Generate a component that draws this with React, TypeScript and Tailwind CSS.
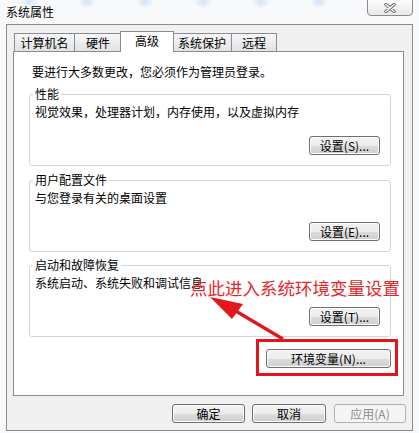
import React from "react";

type BtnProps = { label: string; className?: string; disabled?: boolean };

function WinButton({ label, className = "", disabled = false }: BtnProps) {
  return (
    <button
      className={`h-[19px] rounded-[3px] border text-[12px] leading-none flex items-center justify-center ${
        disabled
          ? "border-[#adb2b5] bg-[#f4f4f4] text-[#8d8d8d]"
          : "border-[#707070] bg-[linear-gradient(#f3f3f3_0%,#ececec_50%,#dcdcdc_50%,#d0d0d0_100%)] shadow-[inset_0_0_0_1px_#fbfbfb] text-black"
      } ${className}`}
    >
      {label}
    </button>
  );
}

type GroupProps = { title: string; desc: string; button: string; className?: string };

function Group({ title, desc, button, className = "" }: GroupProps) {
  return (
    <fieldset className={`border border-[#d5d5d5] rounded-[3px] pl-[3px] pr-[10px] pb-[10px] ${className}`}>
      <legend className="px-[2px] text-[12px] leading-[14px]">{title}</legend>
      <div className="ml-[2px] mt-[4px] text-[12px] leading-[14px]">{desc}</div>
      <div className="mt-[17px] flex justify-end">
        <WinButton label={button} className="w-[71px]" />
      </div>
    </fieldset>
  );
}

const tabs = [
  { name: "计算机名", cls: "w-[61px]" },
  { name: "硬件", cls: "-ml-px w-[48px]" },
  { name: "高级", cls: "-ml-[2px] w-[54px]", active: true },
  { name: "系统保护", cls: "-ml-[2px] w-[60px]" },
  { name: "远程", cls: "-ml-px w-[46px]" },
];

export default function App() {
  return (
    <div className="relative w-[419px] h-[433px] overflow-hidden bg-[#f7f9fb] text-black font-['Noto_Sans_CJK_SC','Noto_Sans',sans-serif]">
      {/* Title bar */}
      <div className="flex h-[24px] items-start bg-[radial-gradient(ellipse_9px_6px_at_50%_2px,#cfe1f3,transparent)] bg-[length:58px_24px] bg-repeat-x">
        <span className="pl-[6px] pt-[5px] text-[12px] leading-[14px]">系统属性</span>
        <button className="ml-auto mr-[6px] -mt-px flex h-[17px] w-[46px] items-center justify-center rounded-b-[4px] border border-[#8a8a8a] bg-[linear-gradient(#fdfdfd,#e8e8e8)]">
          <svg width="12" height="10" viewBox="0 0 12 10">
            <path d="M2 1.5 L10 8.5 M10 1.5 L2 8.5" stroke="#6f6f6f" strokeWidth="3.4" strokeLinecap="round" fill="none" />
            <path d="M2 1.5 L10 8.5 M10 1.5 L2 8.5" stroke="#ffffff" strokeWidth="1.4" strokeLinecap="round" fill="none" />
          </svg>
        </button>
      </div>

      {/* Dialog body */}
      <div className="ml-[6px] h-[407px] w-[407px] border border-[#8c8c8c] bg-[#f0f0f0]">
        <div className="px-[6px] pt-[6px]">
          {/* Tabs */}
          <div className="flex h-[20px] items-end pl-[1px]">
            {tabs.map((t) =>
              t.active ? (
                <div
                  key={t.name}
                  className={`relative z-10 mb-[-1px] flex h-[21px] items-start justify-center border border-b-0 border-[#898c95] bg-white pt-[2px] text-[12px] leading-[14px] ${t.cls}`}
                >
                  {t.name}
                </div>
              ) : (
                <div
                  key={t.name}
                  className={`flex h-[18px] items-start justify-center border border-b-0 border-[#898c95] bg-[linear-gradient(#f7f7f7,#e2e2e2)] pt-[2px] text-[12px] leading-[14px] ${t.cls}`}
                >
                  {t.name}
                </div>
              )
            )}
          </div>

          {/* Tab panel */}
          <div className="h-[345px] w-[391px] border border-[#898c95] bg-white pl-[15px] pr-[12px] pt-[13px]">
            <div className="ml-[3px] text-[12px] leading-[14px]">要进行大多数更改，您必须作为管理员登录。</div>
            <Group className="mt-[8px]" title="性能" desc="视觉效果，处理器计划，内存使用，以及虚拟内存" button="设置(S)..." />
            <Group className="mt-[7px]" title="用户配置文件" desc="与您登录有关的桌面设置" button="设置(E)..." />
            <Group className="mt-[6px]" title="启动和故障恢复" desc="系统启动、系统失败和调试信息" button="设置(T)..." />
            <div className="mt-[12px] flex justify-end">
              <WinButton label="环境变量(N)..." className="w-[125px]" />
            </div>
          </div>

          {/* Bottom buttons */}
          <div className="mt-[8px] flex justify-end">
            <WinButton label="确定" className="w-[73px]" />
            <WinButton label="取消" className="ml-[7px] w-[74px]" />
            <WinButton label="应用(A)" className="ml-[8px] w-[72px]" disabled />
          </div>
        </div>
      </div>

      {/* Annotation overlay */}
      <div className="pointer-events-none absolute left-[256px] top-[339px] h-[37px] w-[142px] border-[3px] border-[#e3161c]" />
      <div className="pointer-events-none absolute left-[190px] top-[278px] whitespace-nowrap text-[17.5px] leading-[20px] text-[#e8262a]">
        点此进入系统环境变量设置
      </div>
      <svg className="pointer-events-none absolute left-0 top-0" width="419" height="433" viewBox="0 0 419 433">
        <line x1="283" y1="339" x2="234" y2="310" stroke="#e3161c" strokeWidth="3.2" />
        <polygon points="210,297 243,304 232,319" fill="#e3161c" />
      </svg>
    </div>
  );
}
